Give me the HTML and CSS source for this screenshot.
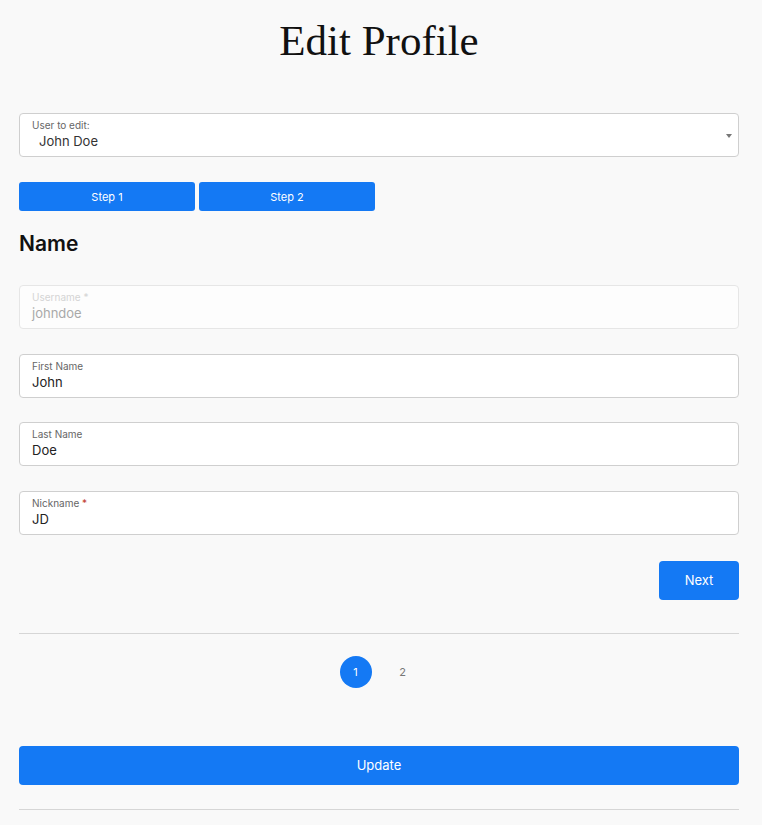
FILE: index.html
```html
<!DOCTYPE html>
<html lang="en">
<head>
<meta charset="UTF-8">
<meta name="viewport" content="width=device-width, initial-scale=1.0">
<title>Edit Profile</title>
<link rel="stylesheet" href="styles.css">
</head>
<body>

<div class="page">
    <h1 class="title">Edit Profile</h1>

    <!-- user picker -->
    <div class="field select-field">
        <span class="field-label">User to edit:</span>
        <span class="field-value">John Doe</span>
        <span class="caret"></span>
    </div>

    <div class="steps">
        <button class="step">Step 1</button>
        <button class="step">Step 2</button>
    </div>

    <h2 class="section">Name</h2>

    <div class="field disabled">
        <span class="field-label">Username <span class="req">*</span></span>
        <span class="field-value">johndoe</span>
    </div>
    <div class="field">
        <span class="field-label">First Name</span>
        <span class="field-value">John</span>
    </div>
    <div class="field">
        <span class="field-label">Last Name</span>
        <span class="field-value">Doe</span>
    </div>
    <div class="field">
        <span class="field-label">Nickname <span class="req">*</span></span>
        <span class="field-value">JD</span>
    </div>

    <div class="actions">
        <button class="btn">Next</button>
    </div>

    <hr class="rule">

    <div class="pager">
        <span class="page-dot active">1</span>
        <span class="page-dot">2</span>
    </div>

    <button class="btn btn-wide">Update</button>

    <hr class="rule">
</div>

</body>
</html>
```

FILE: styles.css
```css
body {
    font-family: Inter, "Noto Sans", sans-serif;
    background-color: #f9f9f9;
    margin: 0;
    padding: 0;
    color: #111;
}
.page {
    padding: 0 23px 0 19px;
}
.title {
    font-family: "Liberation Serif", serif;
    font-weight: normal;
    font-size: 43px;
    text-align: center;
    margin: 16px 0 48px;
    color: #111;
}
.field {
    position: relative;
    display: flex;
    flex-direction: column;
    height: 44px;
    box-sizing: border-box;
    background-color: #fff;
    border: 1px solid #cfcfcf;
    border-radius: 4px;
    padding: 4px 12px 0;
    margin-bottom: 24.5px;
}
.field-label {
    font-size: 10px;
    color: #666;
    line-height: 14px;
}
.field-value {
    font-size: 13px;
    line-height: 18px;
    color: #222;
}
.req {
    color: #c0392b;
}
.select-field {
    margin-bottom: 25px;
}
.select-field .field-value {
    padding-left: 7px;
    color: #333;
}
.caret {
    position: absolute;
    right: 6px;
    top: 20px;
    border-left: 3px solid transparent;
    border-right: 3px solid transparent;
    border-top: 4px solid #777;
}
.disabled {
    border-color: #e6e6e6;
    background-color: #fdfdfd;
}
.disabled .field-label,
.disabled .req {
    color: #d4d4d4;
}
.disabled .field-value {
    color: #a9a9a9;
}
.steps {
    display: flex;
    gap: 4px;
}
.step {
    width: 176px;
    height: 29px;
    border: none;
    border-radius: 3px;
    background-color: #1479f4;
    color: #fff;
    font-family: Inter, sans-serif;
    font-size: 11px;
}
.section {
    font-size: 21px;
    font-weight: 600;
    margin: 20px 0 29px;
}
.actions {
    display: flex;
    justify-content: flex-end;
    margin-top: 26px;
}
.btn {
    width: 80px;
    height: 39px;
    border: none;
    border-radius: 4px;
    background-color: #1479f4;
    color: #fff;
    font-family: Inter, sans-serif;
    font-size: 13px;
}
.rule {
    border: none;
    border-top: 1px solid #d6d6d6;
    margin: 33px 0 0;
}
.pager {
    display: flex;
    justify-content: center;
    gap: 15px;
    margin: 22px 0 58px;
}
.page-dot {
    width: 32px;
    height: 32px;
    border-radius: 50%;
    display: flex;
    align-items: center;
    justify-content: center;
    font-size: 11px;
    color: #777;
}
.page-dot.active {
    background-color: #1479f4;
    color: #fff;
}
.btn-wide {
    width: 100%;
    display: block;
}
.btn-wide + .rule {
    margin-top: 24px;
}
```
